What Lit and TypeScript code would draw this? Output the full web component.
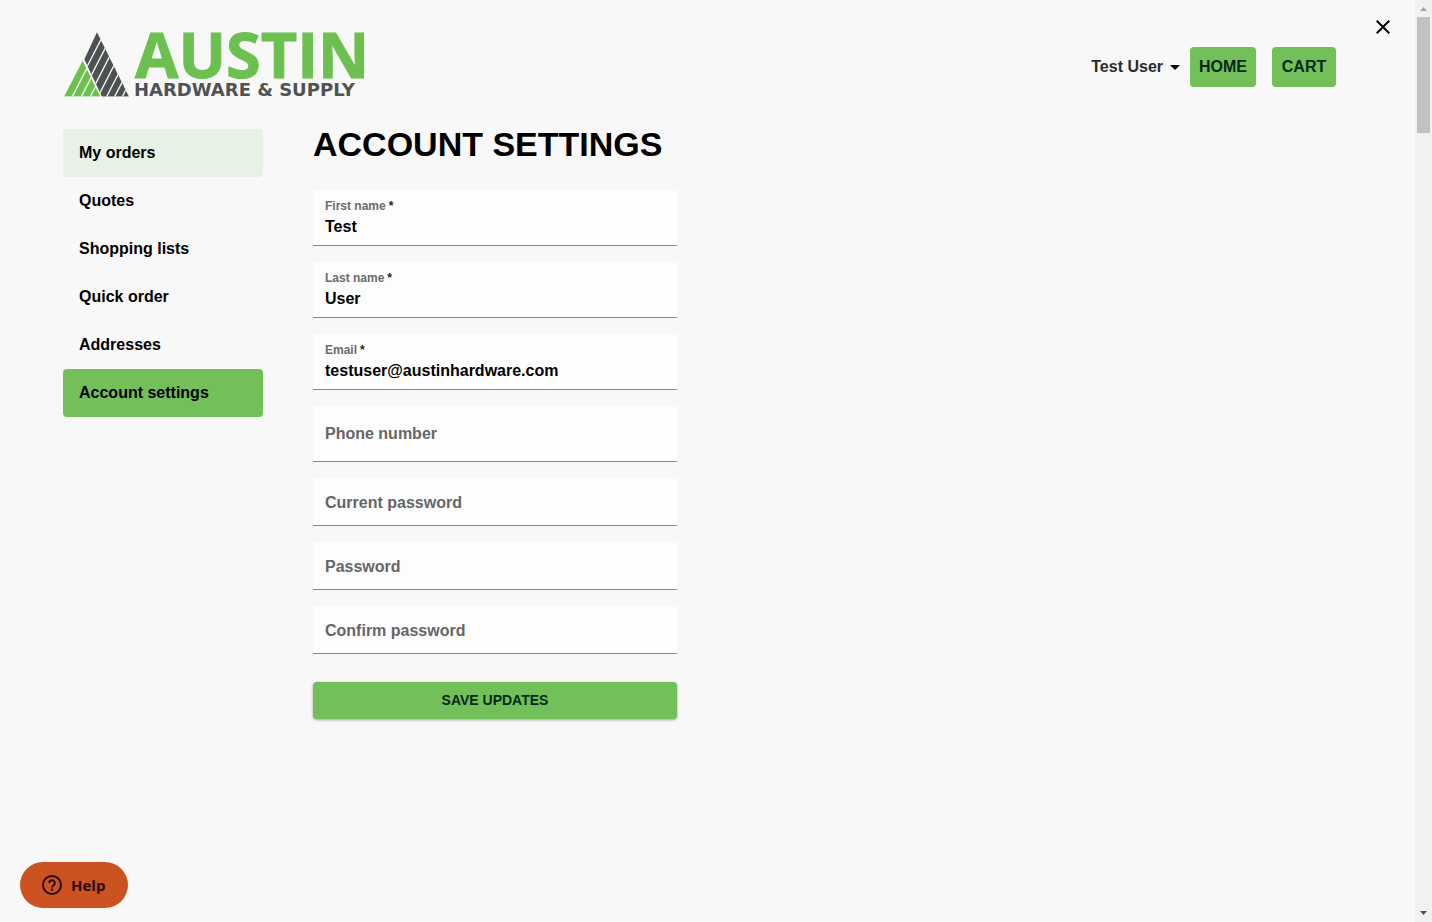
import { LitElement, html, svg, css, nothing } from "lit";
import { customElement, property } from "lit/decorators.js";

@customElement("brand-logo")
class BrandLogo extends LitElement {
  static styles = css`
    :host { display: block; }
    svg { display: block; overflow: visible; }
    .name {
      font: 700 63px "Open Sans", sans-serif;
      fill: #6cc04f;
      stroke: #6cc04f;
      stroke-width: 1px;
    }
    .tag { font: 700 18px "DejaVu Sans", sans-serif; fill: #4f5354; }
  `;

  render() {
    const dark = [50, 76, 102, 129, 155, 179, 202];
    const green = [52, 79, 106];
    const cut = (b: number) => svg`<path d="M${b - 10} 234.5 L${b + 111} -1.4" stroke="#f8f8f8" stroke-width="4" />`;
    return html`
      <svg width="304" height="70" viewBox="0 0 304 70" role="img" aria-label="Austin Hardware &amp; Supply">
        <defs>
          <clipPath id="peak"><path d="M126 22L222 215H141L88 103Z" /></clipPath>
          <clipPath id="slope"><path d="M83 107L136 215H27Z" /></clipPath>
        </defs>
        <g transform="translate(-8 -5) scale(0.3333)">
          <g clip-path="url(#peak)">
            <path d="M0 0H240V215H0Z" fill="#4d5152" />
            ${dark.map(cut)}
          </g>
          <g clip-path="url(#slope)">
            <path d="M0 0H240V215H0Z" fill="#6cc04f" />
            ${green.map(cut)}
          </g>
        </g>
        <text class="name" x="72" y="48">AUSTIN</text>
        <text class="tag" x="71" y="66">HARDWARE &amp; SUPPLY</text>
      </svg>
    `;
  }
}

@customElement("text-field")
class TextField extends LitElement {
  @property() label = "";
  @property() value = "";
  @property() type = "text";
  @property({ type: Boolean }) required = false;
  @property({ type: Boolean, reflect: true }) compact = false;

  static styles = css`
    :host { display: block; }
    .field {
      box-sizing: border-box;
      height: 56px;
      display: grid;
      grid-template-rows: 16px 25px;
      padding: 8px 12px 0;
      background: #fdfdfd;
      border-bottom: 1px solid #8b8b8b;
      border-radius: 4px 4px 0 0;
    }
    label { font-size: 12px; line-height: 16px; color: #6b6b6b; }
    .star { color: #222; margin-left: 3px; }
    input {
      font: inherit;
      color: #000;
      border: 0;
      padding: 0;
      margin: 0;
      width: 100%;
      background: none;
      outline: none;
    }
    .empty { grid-template-rows: 1fr; padding-top: 0; }
    .empty label, .empty input { grid-area: 1 / 1; }
    .empty label {
      align-self: center;
      font-size: 16px;
      line-height: 24px;
      color: #666;
      pointer-events: none;
    }
    :host([compact]) .field { height: 48px; padding-top: 2px; }
  `;

  render() {
    return html`
      <div class="field ${this.value ? "" : "empty"}">
        <label for="box">${this.label}${this.required ? html`<span class="star">*</span>` : nothing}</label>
        <input id="box" type=${this.type} .value=${this.value} ?required=${this.required} />
      </div>
    `;
  }
}

@customElement("app-root")
class AppRoot extends LitElement {
  static styles = css`
    :host {
      display: flex;
      min-height: 100vh;
      background: #f8f8f8;
      color: #000;
      font: 700 16px/24px "Liberation Sans", Arial, sans-serif;
    }
    * { box-sizing: border-box; }
    button { font: inherit; border: 0; margin: 0; cursor: pointer; }
    a { color: inherit; text-decoration: none; }
    .page { flex: 1; min-width: 0; }
    .top {
      display: flex;
      align-items: flex-start;
      padding: 7px 12px 0 63px;
    }
    .brand { margin-top: 23px; }
    .nav {
      display: flex;
      align-items: center;
      margin: 40px 27px 0 auto;
    }
    .user {
      display: flex;
      align-items: center;
      padding: 0 3px 0 0;
      background: none;
      color: #2b2b2b;
    }
    .user svg { fill: #000; }
    .pill {
      display: flex;
      align-items: center;
      justify-content: center;
      height: 40px;
      min-width: 64px;
      padding: 0 9px;
      border-radius: 4px;
      background: #73bf5a;
      color: #06291a;
    }
    .pill + .pill { margin-left: 16px; }
    .close { display: flex; padding: 8px; background: none; }
    .body {
      display: grid;
      grid-template-columns: 200px minmax(0, 364px);
      column-gap: 50px;
      padding: 29px 63px 24px;
    }
    .menu { display: flex; flex-direction: column; }
    .item {
      display: flex;
      align-items: center;
      height: 48px;
      padding: 0 16px;
      border-radius: 4px;
    }
    .hover { background: #e7f1e5; }
    .current { background: #73bf5a; }
    h1 { margin: 0 0 31px; font-size: 34px; line-height: 30px; white-space: nowrap; }
    form { display: flex; flex-direction: column; gap: 16px; }
    .save {
      height: 37px;
      margin-top: 12px;
      padding: 0 0 2px;
      border-radius: 4px;
      background: #73bf5a;
      color: #06291a;
      font-size: 14px;
      box-shadow: 0 1px 3px rgba(0, 0, 0, 0.35);
    }
    .help {
      position: fixed;
      left: 20px;
      bottom: 14px;
      display: flex;
      align-items: center;
      gap: 8px;
      height: 46px;
      padding: 0 23px 0 21px;
      border-radius: 23px;
      background: #cb5321;
      color: #2a0a04;
      font: 700 15px/20px "Open Sans", sans-serif;
    }
    .bar {
      position: sticky;
      top: 0;
      width: 17px;
      height: 100vh;
      background: #f1f1f1;
      display: flex;
      flex-direction: column;
      align-items: center;
    }
    .thumb { width: 13px; height: 116px; background: #c1c1c1; }
    .down { margin-top: auto; }
    .bar svg { display: block; }
  `;

  private items = ["My orders", "Quotes", "Shopping lists", "Quick order", "Addresses", "Account settings"];

  render() {
    return html`
      <div class="page">
        <header class="top">
          <a class="brand" href="#"><brand-logo></brand-logo></a>
          <nav class="nav">
            <button class="user" aria-haspopup="menu">
              Test User
              <svg width="24" height="24" viewBox="0 0 24 24"><path d="M7 10l5 5 5-5z" /></svg>
            </button>
            <a class="pill" href="#home">HOME</a>
            <a class="pill" href="#cart">CART</a>
          </nav>
          <button class="close" aria-label="Close">
            <svg width="24" height="24" viewBox="0 0 24 24">
              <path d="M19 6.41L17.59 5 12 10.59 6.41 5 5 6.41 10.59 12 5 17.59 6.41 19 12 13.41 17.59 19 19 17.59 13.41 12z" />
            </svg>
          </button>
        </header>
        <div class="body">
          <nav class="menu">
            ${this.items.map((label, i) => html`
              <a class="item ${i === 0 ? "hover" : i === 5 ? "current" : ""}" href="#">${label}</a>
            `)}
          </nav>
          <main>
            <h1>ACCOUNT SETTINGS</h1>
            <form>
              <text-field label="First name" value="Test" required></text-field>
              <text-field label="Last name" value="User" required></text-field>
              <text-field label="Email" type="email" value="testuser@austinhardware.com" required></text-field>
              <text-field label="Phone number" type="tel"></text-field>
              <text-field label="Current password" type="password" compact></text-field>
              <text-field label="Password" type="password" compact></text-field>
              <text-field label="Confirm password" type="password" compact></text-field>
              <button class="save" type="button">SAVE UPDATES</button>
            </form>
          </main>
        </div>
      </div>
      <div class="bar" aria-hidden="true">
        <svg width="17" height="17" viewBox="0 0 17 17"><path d="M5 11l3.500-4 3.500 4z" fill="#a3a3a3" /></svg>
        <div class="thumb"></div>
        <svg class="down" width="17" height="17" viewBox="0 0 17 17"><path d="M5 6l3.500 4 3.500-4z" fill="#505050" /></svg>
      </div>
      <button class="help">
        <svg width="22" height="22" viewBox="0 0 22 22" fill="none" stroke="#2a0a04" stroke-width="2">
          <circle cx="11" cy="11" r="9" />
          <path d="M8.200 9a2.800 2.800 0 1 1 4.400 2.300C11.400 12.100 11 12.500 11 13.400" />
          <circle cx="11" cy="15.800" r="1.200" fill="#2a0a04" stroke="none" />
        </svg>
        Help
      </button>
    `;
  }
}
